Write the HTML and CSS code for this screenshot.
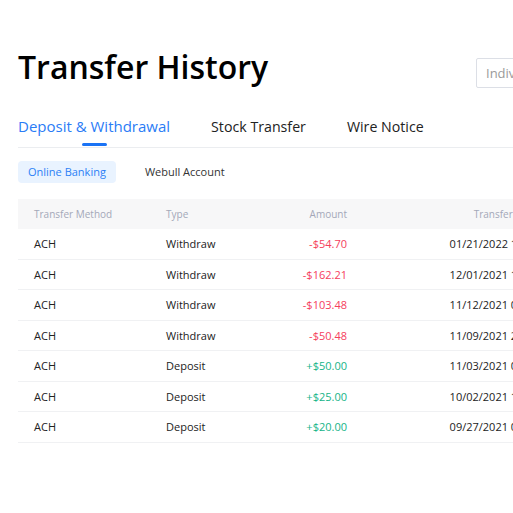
FILE: index.html
```html
<!DOCTYPE html>
<html>
<head>
<meta charset="utf-8">
<link rel="stylesheet" href="styles.css">
</head>
<body>
<div class="page">
  <div class="head">
    <h1 class="title">Transfer History</h1>
    <div class="select">Individual</div>
  </div>
  <div class="tabs">
    <div class="tab active">Deposit &amp; Withdrawal</div>
    <div class="tab">Stock Transfer</div>
    <div class="tab">Wire Notice</div>
  </div>
  <div class="pills">
    <div class="pill active">Online Banking</div>
    <div class="pill">Webull Account</div>
  </div>
  <div class="table">
    <div class="row th">
      <div class="c1">Transfer Method</div><div class="c2">Type</div><div class="c3">Amount</div><div class="c4">Transfer Time</div>
    </div>
    <div class="row">
      <div class="c1">ACH</div><div class="c2">Withdraw</div><div class="c3 neg">-$54.70</div><div class="c4">01/21/2022 10:12:33</div>
    </div>
    <div class="row">
      <div class="c1">ACH</div><div class="c2">Withdraw</div><div class="c3 neg">-$162.21</div><div class="c4">12/01/2021 11:05:21</div>
    </div>
    <div class="row">
      <div class="c1">ACH</div><div class="c2">Withdraw</div><div class="c3 neg">-$103.48</div><div class="c4">11/12/2021 09:41:10</div>
    </div>
    <div class="row">
      <div class="c1">ACH</div><div class="c2">Withdraw</div><div class="c3 neg">-$50.48</div><div class="c4">11/09/2021 21:30:02</div>
    </div>
    <div class="row">
      <div class="c1">ACH</div><div class="c2">Deposit</div><div class="c3 pos">+$50.00</div><div class="c4">11/03/2021 08:15:44</div>
    </div>
    <div class="row">
      <div class="c1">ACH</div><div class="c2">Deposit</div><div class="c3 pos">+$25.00</div><div class="c4">10/02/2021 14:22:19</div>
    </div>
    <div class="row">
      <div class="c1">ACH</div><div class="c2">Deposit</div><div class="c3 pos">+$20.00</div><div class="c4">09/27/2021 09:03:51</div>
    </div>
  </div>
</div>
</body>
</html>
```

FILE: styles.css
```css
html, body {
  margin: 0;
  padding: 0;
  background: #fff;
  overflow: hidden;
}
body {
  font-family: "Open Sans", "Noto Sans", sans-serif;
  color: #222;
}
.page {
  width: 820px;
  padding: 40px 0 0 18px;
}
.head {
  display: flex;
  align-items: flex-start;
  height: 54px;
}
.title {
  flex: 0 0 458px;
  margin: 0;
  font-size: 32px;
  font-weight: 600;
  color: #000;
  line-height: 54px;
}
.select {
  box-sizing: border-box;
  width: 200px;
  height: 30px;
  margin-top: 18px;
  border: 1px solid #dcdfe6;
  border-radius: 2px;
  padding-left: 9px;
  font-size: 13px;
  line-height: 28px;
  color: #9a9a9a;
}
.tabs {
  display: flex;
  align-items: baseline;
  gap: 41px;
  margin-top: 17px;
  border-bottom: 1px solid #ebedf0;
}
.tab {
  font-size: 14.2px;
  line-height: 20px;
  padding: 5px 0 10px;
  color: #222;
  position: relative;
}
.tab.active {
  font-size: 15px;
  color: #2a7cf6;
}
.tab.active::after {
  content: "";
  position: absolute;
  left: 50%;
  bottom: 0;
  width: 25px;
  margin-left: -12px;
  height: 3px;
  border-radius: 2px;
  background: #1a73f5;
}
.pills {
  display: flex;
  gap: 19px;
  margin-top: 13px;
}
.pill {
  height: 22px;
  line-height: 22px;
  padding: 0 10px;
  font-size: 11px;
  border-radius: 4px;
  color: #333;
}
.pill.active {
  background: #e9f3ff;
  color: #2b7ff6;
}
.table {
  margin-top: 16px;
  font-size: 11px;
}
.row {
  display: grid;
  grid-template-columns: 132px 100px 81px 310px 1fr;
  padding-left: 16px;
  box-sizing: border-box;
  height: 30.5px;
  align-items: center;
  border-bottom: 1px solid #f0f1f3;
  color: #222;
}
.row.th {
  height: 30px;
  background: #f7f7f8;
  border-bottom: none;
  color: #a4a8b8;
  font-size: 10px;
}
.c3 {
  text-align: right;
}
.c4 {
  text-align: center;
}
.th .c4 {
  padding-left: 8px;
}
.neg {
  color: #f5405d;
}
.pos {
  color: #15b488;
}
```
